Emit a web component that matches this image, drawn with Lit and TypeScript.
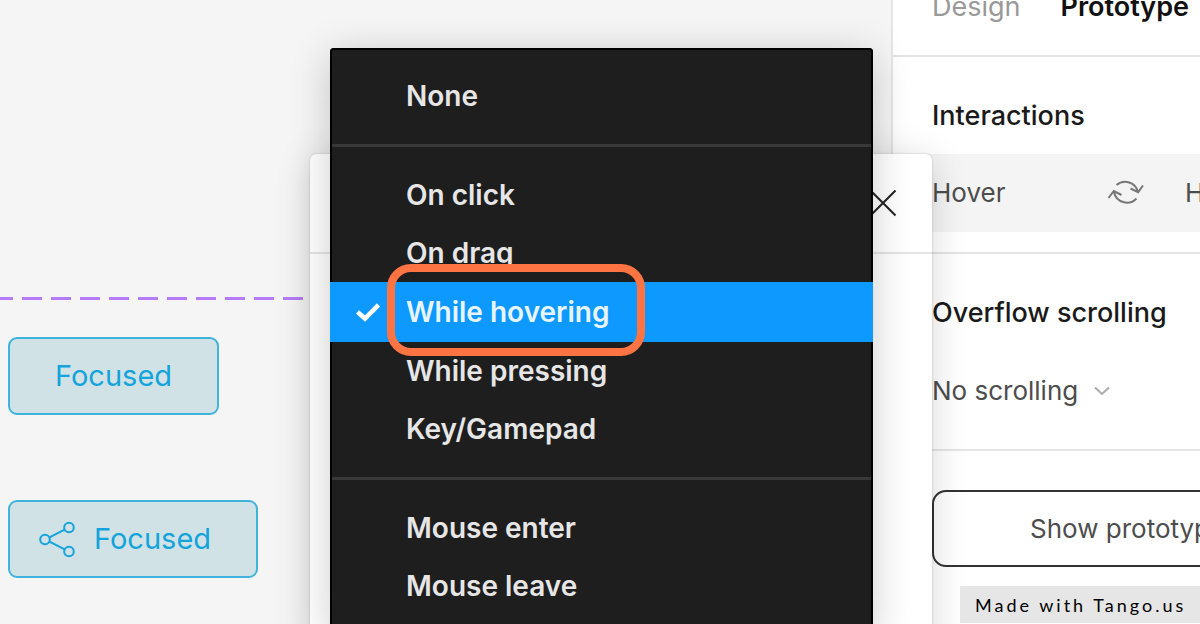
import { LitElement, html, css, nothing } from "lit";
import { customElement, state } from "lit/decorators.js";
import { classMap } from "lit/directives/class-map.js";

const TRIGGERS: string[][] = [
  ["None"],
  ["On click", "On drag", "While hovering", "While pressing", "Key/Gamepad"],
  ["Mouse enter", "Mouse leave"],
];

@customElement("trigger-menu")
class TriggerMenu extends LitElement {
  @state() private selected = "While hovering";

  static styles = css`
    :host {
      display: block;
    }
    .menu {
      background: #1e1e1e;
      border-radius: 4px 4px 0 0;
      box-shadow: inset 0 0 0 2px #000, 0 6px 40px rgba(0, 0, 0, 0.2);
    }
    .group {
      display: flex;
      flex-direction: column;
      padding: 19px 0;
    }
    .divider {
      height: 3px;
      margin: 0 2px;
      border: 0;
      background: #383838;
    }
    .item {
      display: grid;
      grid-template-columns: 76px 1fr;
      align-items: center;
      height: 58px;
      padding: 0;
      border: 0;
      background: none;
      color: #e6e6e6;
      font: 600 28px/36px Inter, sans-serif;
      text-align: left;
    }
    .mark {
      display: flex;
      justify-content: center;
    }
    .selected {
      position: relative;
      height: 60px;
      background: #0d99ff;
      color: #e8f5ff;
    }
    .highlight {
      position: absolute;
      left: 57px;
      top: -18px;
      width: 258px;
      height: 92px;
      box-sizing: border-box;
      border: 8px solid #ff7442;
      border-radius: 24px;
      pointer-events: none;
    }
  `;

  private item(label: string) {
    const on = label === this.selected;
    return html`<button
      class=${classMap({ item: true, selected: on })}
      role="menuitemradio"
      aria-checked=${on ? "true" : "false"}
      @click=${() => (this.selected = label)}
    >
      <span class="mark">
        ${on
          ? html`<svg width="26" height="20" viewBox="0 0 26 20" aria-hidden="true">
              <path d="M2.5 10 L10 16.5 L23.5 2.8" fill="none" stroke="#fff" stroke-width="4.6" />
            </svg>`
          : nothing}
      </span>
      <span>${label}</span>
      ${on ? html`<span class="highlight"></span>` : nothing}
    </button>`;
  }

  render() {
    return html`<div class="menu" role="menu" aria-label="Trigger">
      ${TRIGGERS.map(
        (group, i) => html`${i ? html`<hr class="divider" />` : nothing}
          <div class="group" role="group">${group.map((label) => this.item(label))}</div>`
      )}
    </div>`;
  }
}

@customElement("prototype-panel")
class PrototypePanel extends LitElement {
  static styles = css`
    :host {
      display: flex;
      flex-direction: column;
      box-sizing: border-box;
      overflow: hidden;
      border-left: 2px solid #e5e5e5;
      background: #fff;
      color: #1a1a1a;
      font: 400 26px/32px Inter, sans-serif;
    }
    .tabs {
      display: flex;
      gap: 40px;
      height: 55px;
      padding-left: 39px;
      border-bottom: 2px solid #e5e5e5;
      font-size: 27px;
      white-space: nowrap;
    }
    .tab {
      align-self: flex-start;
      margin-top: -9px;
      padding: 0;
      border: 0;
      background: none;
      color: #999;
      font: inherit;
    }
    .active {
      color: #111;
      font-weight: 600;
    }
    .section {
      border-bottom: 2px solid #e5e5e5;
    }
    .title {
      margin: 0;
      padding: 43px 0 22px 39px;
      font: 500 27px/32px Inter, sans-serif;
      white-space: nowrap;
    }
    .interaction {
      display: grid;
      grid-template-columns: 174px 79px 1fr;
      align-items: center;
      height: 78px;
      margin-bottom: 20px;
      padding-left: 39px;
      background: #f4f4f4;
      color: #4d4d4d;
      white-space: nowrap;
    }
    .overflow {
      display: flex;
      align-items: center;
      gap: 14px;
      padding: 24px 0 42px 39px;
    }
    .choice {
      appearance: none;
      margin: 0;
      padding: 0;
      border: 0;
      background: none;
      color: #4d4d4d;
      font: inherit;
    }
    .show {
      box-sizing: border-box;
      width: 480px;
      height: 77px;
      margin: 39px 0 0 39px;
      padding: 0 0 0 96px;
      border: 2px solid #333;
      border-radius: 14px;
      background: none;
      color: #4d4d4d;
      font: inherit;
      text-align: left;
    }
  `;

  render() {
    return html`
      <nav class="tabs">
        <button class="tab">Design</button>
        <button class="tab active">Prototype</button>
      </nav>
      <section class="section">
        <h2 class="title">Interactions</h2>
        <div class="interaction">
          <span>Hover</span>
          <svg width="40" height="30" viewBox="0 0 40 30" fill="none" stroke="#777" stroke-width="2" aria-hidden="true">
            <path d="M10.5 7 A13.2 13.2 0 0 1 32 14 M24.5 10.5 L32.2 14.2 L37 7.5" />
            <path d="M30.5 20.5 A13.2 13.2 0 0 1 8 14 M2.5 20 L7.8 13 L15.5 17" />
          </svg>
          <span>Hover</span>
        </div>
      </section>
      <section class="section">
        <h2 class="title">Overflow scrolling</h2>
        <div class="overflow">
          <select class="choice" aria-label="Overflow scrolling">
            <option>No scrolling</option>
          </select>
          <svg width="18" height="12" viewBox="0 0 18 12" aria-hidden="true">
            <path d="M2 2.5 L9 9 L16 2.5" fill="none" stroke="#aaa" stroke-width="2" />
          </svg>
        </div>
      </section>
      <button class="show">Show prototype settings</button>
    `;
  }
}

@customElement("app-root")
class AppRoot extends LitElement {
  static styles = css`
    :host {
      position: relative;
      display: grid;
      grid-template-columns: 1fr 309px;
      height: 100vh;
      overflow: hidden;
      background: #f5f5f5;
      font: 400 29px/36px Inter, sans-serif;
    }
    .canvas {
      display: flex;
      flex-direction: column;
      align-items: flex-start;
      padding-top: 297px;
    }
    .guide {
      width: 303px;
      height: 3px;
      margin-bottom: 37px;
      background: repeating-linear-gradient(to left, #b57bf8 0 20px, transparent 20px 29px);
    }
    .node {
      display: flex;
      align-items: center;
      gap: 18px;
      box-sizing: border-box;
      height: 78px;
      margin: 0 0 85px 8px;
      padding: 0 45px;
      border: 2px solid #3fb3dc;
      border-radius: 9px;
      background: #d1e2e7;
      color: #12a4da;
      font: inherit;
    }
    .with-icon {
      padding-left: 29px;
    }
    .dialog {
      position: absolute;
      left: 310px;
      top: 154px;
      bottom: -40px;
      width: 622px;
      border-radius: 6px;
      background: #fff;
      box-shadow: 0 5px 36px rgba(0, 0, 0, 0.16), 0 0 2px rgba(0, 0, 0, 0.24);
    }
    .bar {
      display: flex;
      align-items: center;
      justify-content: flex-end;
      height: 98px;
      padding-right: 35px;
      border-bottom: 2px solid #e5e5e5;
    }
    .close {
      display: flex;
      padding: 0;
      border: 0;
      background: none;
    }
    .trigger {
      position: absolute;
      left: 330px;
      top: 48px;
      width: 543px;
    }
    .badge {
      position: absolute;
      right: 0;
      bottom: 1px;
      width: 240px;
      box-sizing: border-box;
      padding: 3px 0 2px 15px;
      background: #e6e6e6;
      color: #000;
      font: 400 18px/32px Lato, sans-serif;
      letter-spacing: 3px;
      white-space: nowrap;
      text-decoration: none;
    }
  `;

  render() {
    return html`
      <main class="canvas">
        <div class="guide"></div>
        <button class="node">Focused</button>
        <button class="node with-icon">
          <svg width="37" height="37" viewBox="0 0 37 37" fill="none" stroke="currentColor" stroke-width="2" aria-hidden="true">
            <circle cx="6" cy="18.5" r="4.8" />
            <circle cx="30" cy="6.5" r="4.8" />
            <circle cx="30" cy="30.5" r="4.8" />
            <path d="M10.5 16.3 L25.6 8.7 M10.5 20.7 L25.6 28.3" />
          </svg>
          Focused
        </button>
      </main>
      <prototype-panel></prototype-panel>
      <div class="dialog" role="dialog" aria-label="Interaction">
        <div class="bar">
          <button class="close" aria-label="Close">
            <svg width="28" height="28" viewBox="0 0 28 28" aria-hidden="true">
              <path d="M1.5 1.5 L26.5 26.5 M26.5 1.5 L1.5 26.5" stroke="#222" stroke-width="2" />
            </svg>
          </button>
        </div>
      </div>
      <trigger-menu class="trigger"></trigger-menu>
      <a class="badge" href="#tango">Made with Tango.us</a>
    `;
  }
}
